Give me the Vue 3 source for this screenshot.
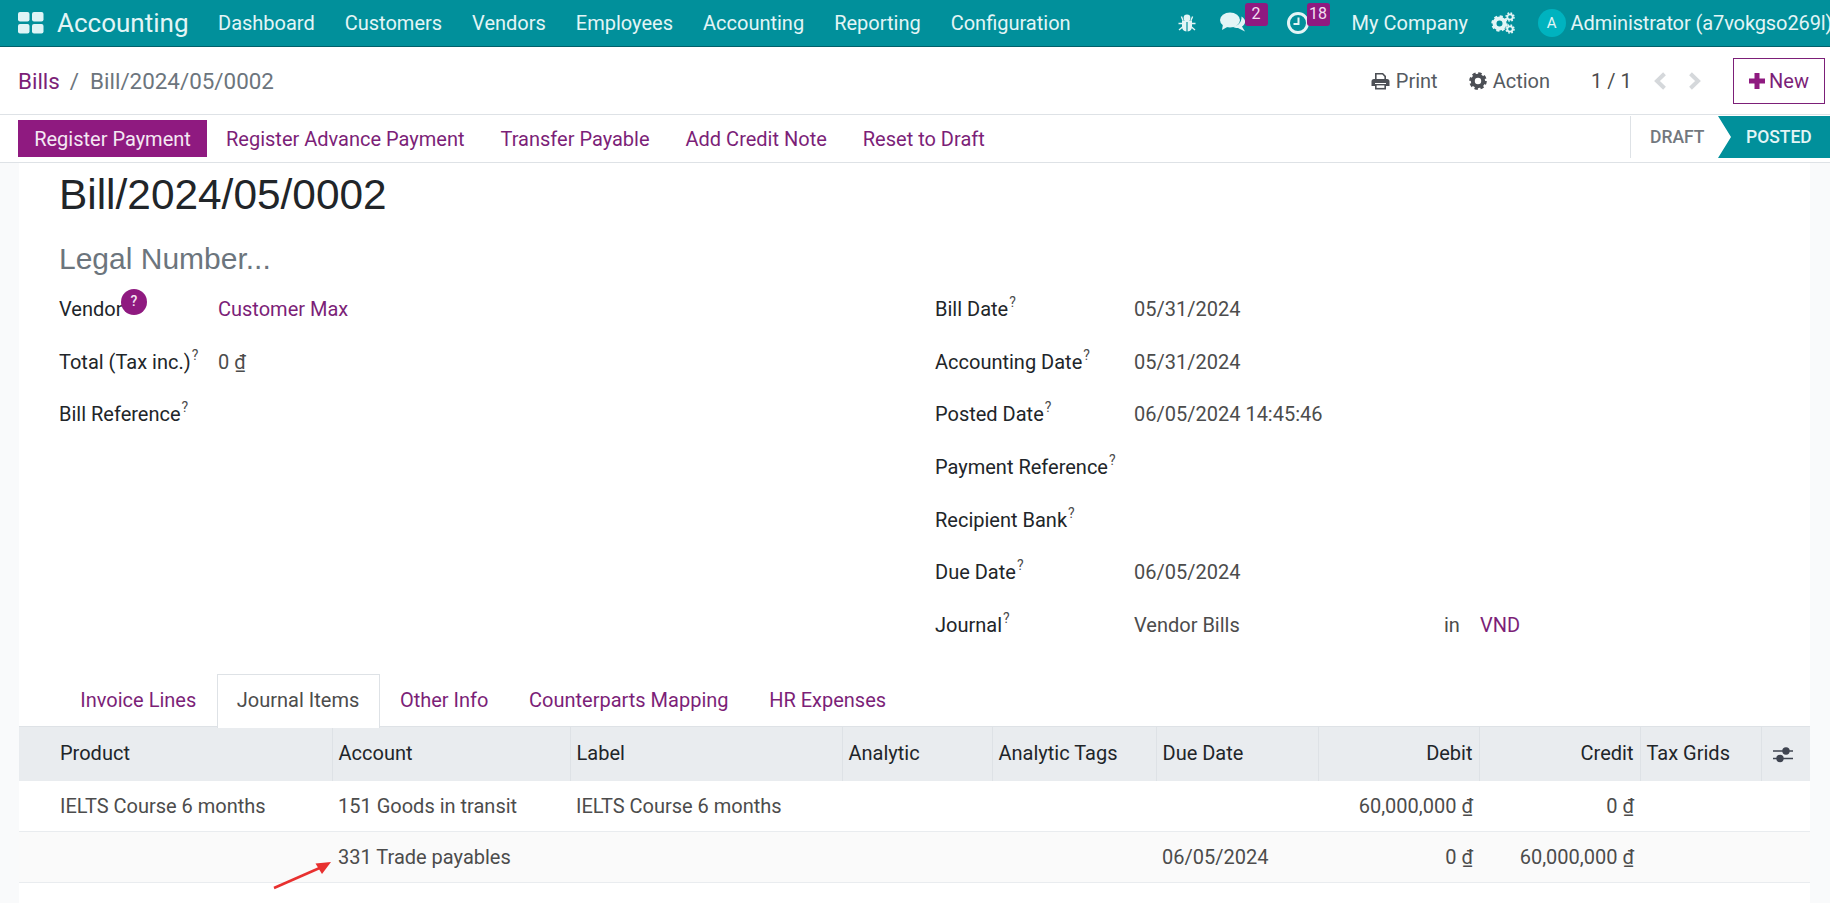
<script setup>
const navItems = ['Dashboard', 'Customers', 'Vendors', 'Employees', 'Accounting', 'Reporting', 'Configuration']
const actions = ['Register Advance Payment', 'Transfer Payable', 'Add Credit Note', 'Reset to Draft']
const tabs = [
  { name: 'Invoice Lines' },
  { name: 'Journal Items', active: true },
  { name: 'Other Info' },
  { name: 'Counterparts Mapping' },
  { name: 'HR Expenses' }
]
const rightFields = [
  { label: 'Bill Date', value: '05/31/2024' },
  { label: 'Accounting Date', value: '05/31/2024' },
  { label: 'Posted Date', value: '06/05/2024 14:45:46' },
  { label: 'Payment Reference', value: '' },
  { label: 'Recipient Bank', value: '' },
  { label: 'Due Date', value: '06/05/2024' }
]
const columns = [
  { name: 'Product', width: 313 },
  { name: 'Account', width: 238 },
  { name: 'Label', width: 272 },
  { name: 'Analytic', width: 150 },
  { name: 'Analytic Tags', width: 164 },
  { name: 'Due Date', width: 162 },
  { name: 'Debit', width: 161, right: true },
  { name: 'Credit', width: 161, right: true },
  { name: 'Tax Grids', width: 121 }
]
const rows = [
  ['IELTS Course 6 months', '151 Goods in transit', 'IELTS Course 6 months', '', '', '', '60,000,000', '0', ''],
  ['', '331 Trade payables', '', '', '', '06/05/2024', '0', '60,000,000', '']
]
</script>

<template>
  <div class="page">
    <header class="topbar">
      <svg class="apps" width="26" height="22" viewBox="0 0 26 22">
        <rect x="0" y="0" width="11.5" height="9.5" rx="2" />
        <rect x="14" y="0" width="11.5" height="9.5" rx="2" />
        <rect x="0" y="12" width="11.5" height="9.5" rx="2" />
        <rect x="14" y="12" width="11.5" height="9.5" rx="2" />
      </svg>
      <span class="brand">Accounting</span>
      <nav class="nav">
        <a v-for="item in navItems" :key="item">{{ item }}</a>
      </nav>
      <div class="systray">
        <svg class="bug" width="18" height="18" viewBox="0 0 18 18">
          <circle cx="9" cy="4" r="3.4" />
          <path d="M4 6.5h10v6a5 5 0 0 1-4.400 5V8h-1.200v9.500A5 5 0 0 1 4 12.500z" />
          <path d="M3.400 2.500 5 6.500M14.600 2.500 13 6.500M.5 9.500H4M14 9.500h3.500M1 16l3.500-3M17 16l-3.500-3" class="legs" />
        </svg>
        <span class="tray-item chat">
          <svg width="26" height="22" viewBox="0 0 26 22">
            <ellipse cx="10" cy="8" rx="10" ry="7.500" />
            <path d="M3 12 2 18l7-4z" />
            <path d="M21.500 4.500C24 6 25.500 8 25 10.500c-.3 1.800-1.500 3-3 4l3 5-7-3.500c-2 0-4-.3-5.500-1.500 4.500-.2 9.500-3 9-10.500z" />
          </svg>
          <b class="badge">2</b>
        </span>
        <span class="tray-item clock">
          <svg width="24" height="24" viewBox="0 0 24 24">
            <circle cx="12" cy="12" r="9.500" class="ring" />
            <path d="M12.500 6.500v6.500H7.500" class="hand" />
          </svg>
          <b class="badge">18</b>
        </span>
        <span class="company">My Company</span>
        <svg class="gears" width="24" height="22" viewBox="0 0 24 22">
          <circle cx="8.500" cy="11.500" r="5" class="gear-body" />
          <circle cx="8.500" cy="11.500" r="7" class="gear-teeth" />
          <circle cx="19" cy="5" r="2.700" class="gear-small" />
          <circle cx="19" cy="5" r="4" class="gear-small-teeth" />
          <circle cx="19" cy="17" r="2.700" class="gear-small" />
          <circle cx="19" cy="17" r="4" class="gear-small-teeth" />
        </svg>
        <span class="avatar">A</span>
        <span class="user">Administrator (a7vokgso269l)</span>
      </div>
    </header>

    <div class="control">
      <div class="crumbs">
        <a>Bills</a><span class="slash">/</span><span class="current">Bill/2024/05/0002</span>
      </div>
      <div class="control-right">
        <span class="tool">
          <svg width="19" height="18" viewBox="0 0 18 18">
            <path d="M3.500 7V1h8l3 3v3h-1.600V4.700L10.800 2.600H5.100V7z" />
            <path d="M2.500 7h13A2.500 2.500 0 0 1 18 9.500V14h-3.500v-3h-11v3H0V9.500A2.500 2.500 0 0 1 2.500 7z" />
            <path d="M3.500 12h11v5.500h-11z" />
            <rect x="5.100" y="13.400" width="7.800" height="2.500" class="slot" />
          </svg>
          Print
        </span>
        <span class="tool action">
          <svg width="18" height="18" viewBox="0 0 18 18">
            <circle cx="9" cy="9" r="5.200" class="tool-gear" />
            <circle cx="9" cy="9" r="7.300" class="tool-teeth" />
          </svg>
          Action
        </span>
        <span class="pager">1 / 1</span>
        <svg class="chev" width="14" height="18" viewBox="0 0 14 18"><path d="M11.500 1.800 4 9l7.500 7.200" /></svg>
        <svg class="chev next" width="14" height="18" viewBox="0 0 14 18"><path d="M2.500 1.800 10 9l-7.500 7.200" /></svg>
        <button class="new-btn">
          <svg width="16" height="16" viewBox="0 0 16 16"><path d="M5.500 0h5v5.500H16v5h-5.500V16h-5v-5.500H0v-5h5.500z" /></svg>
          New
        </button>
      </div>
    </div>

    <div class="statusbar">
      <div class="buttons">
        <button class="primary">Register Payment</button>
        <a v-for="a in actions" :key="a" class="link-btn">{{ a }}</a>
      </div>
      <div class="status">
        <span class="draft">DRAFT</span>
        <span class="posted">POSTED</span>
      </div>
    </div>

    <main class="content">
      <section class="sheet">
        <h1 class="title">Bill/2024/05/0002</h1>
        <div class="legal">Legal Number...</div>

        <div class="groups">
          <div class="group left">
            <div class="field">
              <span class="label">Vendor<i class="help">?</i></span>
              <a class="value link">Customer Max</a>
            </div>
            <div class="field">
              <span class="label">Total (Tax inc.)<sup>?</sup></span>
              <span class="value">0 <u>₫</u></span>
            </div>
            <div class="field">
              <span class="label">Bill Reference<sup>?</sup></span>
            </div>
          </div>
          <div class="group right">
            <div v-for="f in rightFields" :key="f.label" class="field">
              <span class="label">{{ f.label }}<sup>?</sup></span>
              <span class="value">{{ f.value }}</span>
            </div>
            <div class="field">
              <span class="label">Journal<sup>?</sup></span>
              <span class="value journal">Vendor Bills</span>
              <span class="value in">in</span>
              <a class="value link">VND</a>
            </div>
          </div>
        </div>

        <div class="tabs">
          <a v-for="t in tabs" :key="t.name" class="tab" :class="{ active: t.active }">{{ t.name }}</a>
        </div>

        <table class="lines">
          <colgroup>
            <col v-for="c in columns" :key="c.name" :style="{ width: c.width + 'px' }" />
            <col class="opt-col" />
          </colgroup>
          <thead>
            <tr>
              <th v-for="c in columns" :key="c.name" :class="{ num: c.right }">{{ c.name }}</th>
              <th class="opt">
                <svg width="22" height="20" viewBox="0 0 22 20">
                  <path d="M1 6h20M1 13.500h20" class="opt-line" />
                  <circle cx="14" cy="6" r="3.700" />
                  <circle cx="8" cy="13.500" r="3.700" />
                </svg>
              </th>
            </tr>
          </thead>
          <tbody>
            <tr v-for="(row, i) in rows" :key="i" :class="{ alt: i === 1 }">
              <td v-for="(cell, j) in row" :key="j" :class="{ num: columns[j].right }">
                {{ cell }}<template v-if="columns[j].right">&nbsp;<u>₫</u></template>
              </td>
              <td></td>
            </tr>
          </tbody>
        </table>

        <svg class="arrow" width="62" height="30" viewBox="0 0 62 30">
          <path d="M1 28 50 6.500" class="arrow-line" />
          <path d="M58 2 42.500 3.500 49 14z" class="arrow-head" />
        </svg>
      </section>
    </main>
  </div>
</template>

<style>
body {
  margin: 0;
  background: #f9fafb;
}
</style>

<style scoped>
.page {
  width: 1830px;
  height: 903px;
  overflow: hidden;
  display: flex;
  flex-direction: column;
  font-family: Roboto, "Liberation Sans", sans-serif;
  font-size: 20px;
  color: #4c4c4c;
}
.topbar {
  height: 46px;
  flex: none;
  box-sizing: content-box;
  display: flex;
  align-items: center;
  background: #01909b;
  border-bottom: 1px solid #01606a;
  color: #e3f5f6;
  padding-left: 18px;
  white-space: nowrap;
}
.apps {
  fill: #dff4f6;
  margin-right: 13px;
  flex: none;
}
.brand {
  font-size: 26px;
  width: 161px;
  flex: none;
}
.nav {
  display: flex;
  gap: 30px;
}
.systray {
  margin-left: 107px;
  display: flex;
  align-items: center;
}
.bug {
  fill: #e3f5f6;
  flex: none;
}
.legs {
  fill: none;
  stroke: #e3f5f6;
  stroke-width: 1.400;
}
.tray-item {
  position: relative;
  display: flex;
  align-items: center;
  flex: none;
}
.tray-item svg {
  fill: #e3f5f6;
}
.chat {
  margin-left: 24px;
  width: 66px;
}
.clock {
  width: 66px;
}
.ring {
  fill: none;
  stroke: #e3f5f6;
  stroke-width: 3;
}
.hand {
  fill: none;
  stroke: #e3f5f6;
  stroke-width: 2;
}
.badge {
  position: absolute;
  left: 25px;
  top: -9px;
  min-width: 23px;
  height: 23px;
  padding: 0 2px;
  box-sizing: border-box;
  background: #8f1a80;
  border-radius: 3px;
  color: #f3dff0;
  font-size: 16px;
  font-weight: 400;
  line-height: 21px;
  text-align: center;
}
.clock .badge {
  left: 21px;
  top: -8px;
}
.company {
  width: 139px;
  flex: none;
}
.gears {
  margin-right: 23px;
  flex: none;
}
.gear-body,
.gear-small {
  fill: none;
  stroke: #e3f5f6;
}
.gear-body {
  stroke-width: 4;
}
.gear-teeth {
  fill: none;
  stroke: #e3f5f6;
  stroke-width: 2.500;
  stroke-dasharray: 3 2.500;
}
.gear-small {
  stroke-width: 1.800;
}
.gear-small-teeth {
  fill: none;
  stroke: #e3f5f6;
  stroke-width: 1.500;
  stroke-dasharray: 1.700 1.450;
}
.avatar {
  width: 28px;
  height: 28px;
  border-radius: 50%;
  background: #00b3bf;
  color: #e3f5f6;
  font-size: 15px;
  text-align: center;
  line-height: 28px;
  margin-right: 5px;
  flex: none;
}
.user {
  letter-spacing: -0.1px;
}
.control {
  height: 68px;
  flex: none;
  box-sizing: border-box;
  background: #fff;
  border-bottom: 1px solid #dee2e6;
  display: flex;
  justify-content: space-between;
  align-items: center;
  padding: 0 5px 0 18px;
}
.crumbs {
  font-size: 22.400px;
  color: #6c757d;
}
.crumbs a {
  color: #7c1f78;
}
.slash {
  margin: 0 11px 0 10px;
}
.control-right {
  display: flex;
  align-items: center;
  color: #4c4c4c;
}
.control-right .tool {
  display: flex;
  align-items: center;
  gap: 6px;
  color: #555b62;
}
.tool svg {
  fill: #4c4f55;
}
.tool .slot {
  fill: #fff;
}
.action {
  margin-left: 31px;
}
.tool-gear {
  fill: none;
  stroke: #4c4f55;
  stroke-width: 4;
}
.tool-teeth {
  fill: none;
  stroke: #4c4f55;
  stroke-width: 3;
  stroke-dasharray: 3.300 2.430;
}
.pager {
  margin-left: 41px;
  width: 62px;
  flex: none;
}
.chev {
  fill: none;
  stroke: #d5d8db;
  stroke-width: 4;
}
.chev.next {
  margin-left: 21px;
}
.new-btn {
  margin-left: 31px;
  width: 92px;
  height: 46px;
  box-sizing: border-box;
  background: #fff;
  border: 1px solid #7c1f78;
  color: #7c1f78;
  font: 400 20px Roboto, sans-serif;
  padding: 0;
  display: flex;
  align-items: center;
  justify-content: center;
  gap: 4px;
}
.new-btn svg {
  fill: #8f1a80;
}
.statusbar {
  height: 48px;
  flex: none;
  box-sizing: border-box;
  background: #fff;
  border-bottom: 1px solid #dee2e6;
  display: flex;
  justify-content: space-between;
  padding-left: 18px;
}
.buttons {
  display: flex;
  align-items: center;
  margin-top: -1px;
}
.primary {
  width: 189px;
  height: 37px;
  padding: 1px 0 0;
  background: #8f1a80;
  border: 0;
  color: #f4e8f3;
  font: 400 20px Roboto, sans-serif;
  margin-right: 19px;
}
.link-btn {
  color: #7c1f78;
  margin-right: 36px;
  margin-top: 2px;
}
.status {
  display: flex;
  align-items: stretch;
  font-size: 17.500px;
  font-weight: 500;
  height: 42px;
  margin-top: 1px;
}
.draft {
  width: 88px;
  box-sizing: border-box;
  padding-left: 19px;
  border-left: 1px solid #dee2e6;
  color: #73787e;
  line-height: 43px;
}
.posted {
  width: 112px;
  box-sizing: border-box;
  padding-left: 28px;
  background: #01909b;
  color: #e3f5f6;
  line-height: 43px;
  clip-path: polygon(0 0, 100% 0, 100% 100%, 0 100%, 13px 50%);
}
.content {
  flex: 1;
  min-height: 0;
  padding: 0 20px 0 19px;
}
.sheet {
  position: relative;
  height: 100%;
  background: #fff;
  box-sizing: border-box;
  color: #212529;
}
.title {
  margin: 0;
  padding: 8px 0 0 40px;
  font-size: 42.400px;
  font-weight: 400;
  line-height: 48px;
  font-family: "Liberation Sans", Arial, sans-serif;
}
.legal {
  padding: 23px 0 0 40px;
  font-size: 30px;
  line-height: 34px;
  color: #6c757d;
  font-family: "Liberation Sans", Arial, sans-serif;
}
.groups {
  display: grid;
  grid-template-columns: 876px 1fr;
  padding: 7px 0 0 40px;
  height: 389px;
  box-sizing: border-box;
}
.field {
  display: flex;
  align-items: center;
  height: 52.600px;
}
.label {
  width: 159px;
  flex: none;
  color: #212529;
  position: relative;
  white-space: nowrap;
}
.group.right .label {
  width: 199px;
}
.value {
  color: #4c4c4c;
}
.value u {
  text-underline-offset: 2px;
}
.link {
  color: #7c1f78;
}
.journal {
  width: 310px;
}
.in {
  width: 36px;
}
sup {
  font-size: 14px;
  line-height: 0;
  color: #4c4c4c;
  vertical-align: 9px;
  margin-left: 1px;
}
.help {
  position: absolute;
  left: 62px;
  top: -8px;
  width: 26px;
  height: 26px;
  border-radius: 50%;
  background: #8f1a80;
  color: #f4e8f3;
  font-size: 14px;
  font-style: normal;
  font-weight: 500;
  text-align: center;
  line-height: 24px;
}
.tabs {
  display: flex;
  height: 52px;
  padding-left: 41px;
  box-sizing: border-box;
  margin-top: 9px;
}
.tab {
  padding: 0 19.300px;
  color: #7c1f78;
  line-height: 50px;
  border: 1px solid transparent;
  border-bottom: 0;
}
.tab.active {
  color: #4c4c4c;
  background: #fff;
  border-color: #dee2e6;
  position: relative;
  height: 53px;
}
.lines {
  width: 100%;
  table-layout: fixed;
  border-collapse: collapse;
  font-size: 20px;
}
.lines th {
  height: 54px;
  padding: 0 6px 2px;
  background: #e9ecef;
  font-weight: 400;
  color: #212529;
  text-align: left;
  border-left: 1px solid #dee2e6;
  border-top: 1px solid #dee2e6;
  box-sizing: border-box;
}
.lines th:first-child,
.lines td:first-child {
  padding-left: 41px;
  border-left: 0;
}
.lines td {
  height: 51px;
  padding: 0 6px;
  color: #4c4c4c;
  border-bottom: 1px solid #e9ecef;
  box-sizing: border-box;
  white-space: nowrap;
}
.lines td u {
  text-underline-offset: 2px;
}
.lines .alt td {
  background: #fafafa;
}
.lines .num {
  text-align: right;
}
.lines .opt {
  text-align: center;
  padding: 0 6px 0 0;
}
.opt svg {
  fill: #3f4450;
  vertical-align: middle;
}
.opt-line {
  fill: none;
  stroke: #3f4450;
  stroke-width: 1.500;
}
.arrow {
  position: absolute;
  left: 254px;
  top: 697px;
}
.arrow-line {
  fill: none;
  stroke: #e8302f;
  stroke-width: 2.500;
}
.arrow-head {
  fill: #e8302f;
}
</style>
